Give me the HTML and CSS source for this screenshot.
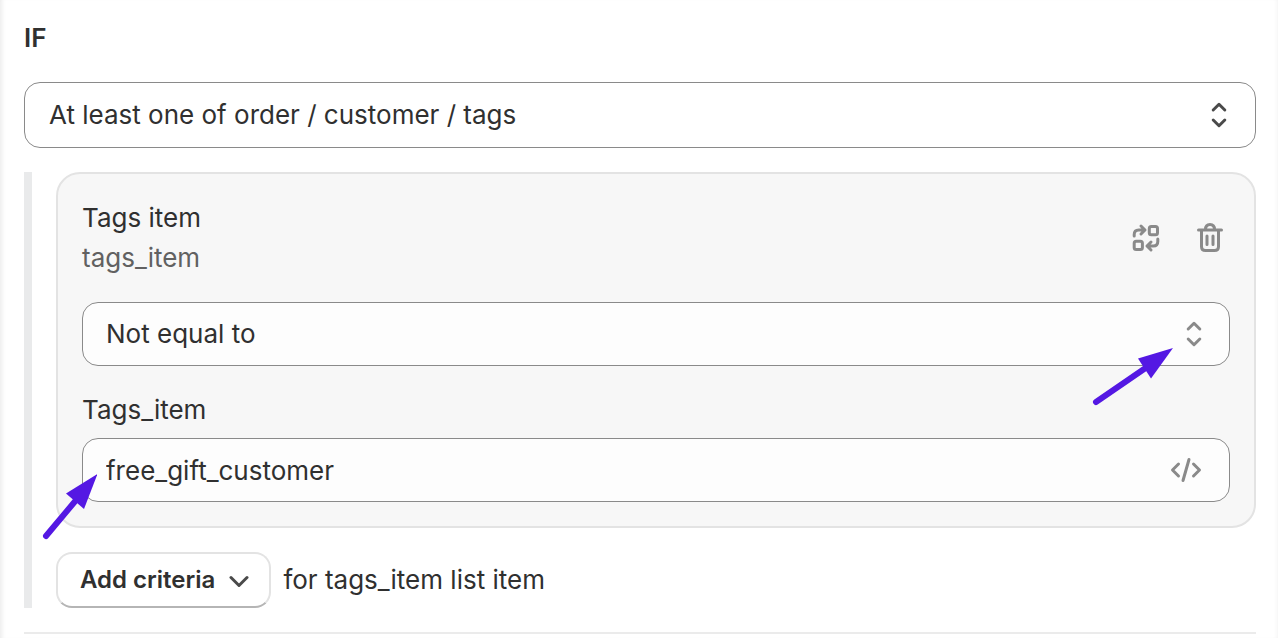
FILE: index.html
```html
<!DOCTYPE html>
<html lang="en">

<head>
    <meta charset="UTF-8">
    <meta name="viewport" content="width=device-width, initial-scale=1.0">
    <title>Condition</title>
    <link rel="stylesheet" href="styles.css">
</head>

<body>
    <main class="panel">
        <h1 class="title">IF</h1>
        <div class="field">
            <select class="control control-large" aria-label="Condition">
                <option>At least one of order / customer / tags</option>
            </select>
            <svg class="icon field-icon icon-dark" viewBox="0 0 40 40">
                <path d="M13.200 15l5.800-5.700l5.800 5.700M13.200 25l5.800 5.700l5.800-5.700" />
            </svg>
        </div>

        <section class="group">
            <div class="card">
                <div class="card-header">
                    <div>
                        <h2 class="card-title">Tags item</h2>
                        <p class="card-subtitle">tags_item</p>
                    </div>
                    <div class="card-actions">
                        <button class="icon-button" type="button" aria-label="Replace">
                            <svg class="icon" viewBox="0 0 40 40">
                                <path d="M8.200 18v-1.500q0-4.500 4.500-4.500h5.500M15 8l4 4l-4 4" />
                                <rect x="23.300" y="8.600" width="8.200" height="8.200" rx="2" />
                                <rect x="8.200" y="23.200" width="8.200" height="8.200" rx="2" />
                                <path d="M31.800 21v2.500q0 4.500-4.500 4.500h-5.500M25 24l-4 4l4 4" />
                            </svg>
                        </button>
                        <button class="icon-button" type="button" aria-label="Delete">
                            <svg class="icon" viewBox="0 0 40 40">
                                <path d="M8.500 12h23M15.500 11.500q0-5 4.500-5t4.500 5M11.500 12v16.500q0 4 4 4h9q4 0 4-4V12M17 18v8.500M23 18v8.500" />
                            </svg>
                        </button>
                    </div>
                </div>

                <div class="field">
                    <select class="control" aria-label="Operator">
                        <option>Not equal to</option>
                    </select>
                    <svg class="icon field-icon" viewBox="0 0 40 40">
                        <path d="M14.200 15l5.800-5.700l5.800 5.700M14.200 25l5.800 5.700l5.800-5.700" />
                    </svg>
                    <svg class="arrow arrow-operator" viewBox="0 0 82 60">
                        <path class="arrow-line" d="M5 54L56 19" />
                        <path class="arrow-head" d="M82 0L47 10.500L60 30.500z" />
                    </svg>
                </div>

                <label class="label" for="tag">Tags_item</label>
                <div class="field">
                    <input class="control" id="tag" type="text" value="free_gift_customer">
                    <button class="icon-button code-button" type="button" aria-label="Insert variable">
                        <svg class="icon" viewBox="0 0 40 40">
                            <path d="M12.500 14l-6 6l6 6M27.500 14l6 6l-6 6M23 9.500l-6 21" />
                        </svg>
                    </button>
                    <svg class="arrow arrow-value" viewBox="0 0 56 66">
                        <path class="arrow-line" d="M5 62L36 25" />
                        <path class="arrow-head" d="M56.500 0L25 19.500L43 35z" />
                    </svg>
                </div>
            </div>

            <div class="criteria">
                <button class="add-button" type="button">
                    Add criteria
                    <svg class="chevron" viewBox="0 0 20 20">
                        <path d="M2 7.500l8 8l8-8" />
                    </svg>
                </button>
                <span>for tags_item list item</span>
            </div>
        </section>
        <hr class="divider">
    </main>
</body>

</html>
```

FILE: styles.css
```css
* {
    box-sizing: border-box;
    margin: 0;
    padding: 0;
}

body {
    background-color: #fff;
    color: #303030;
    font-family: "Inter", "Liberation Sans", sans-serif;
    font-size: 26px;
    line-height: 40px;
}

.panel {
    padding: 18px 22px 4px 24px;
    box-shadow: inset 5px 0 4px -3px #ececec, inset -4px 0 4px -3px #f4f4f4;
}

.title {
    margin-bottom: 24px;
    font-size: 26px;
    font-weight: 600;
}

.field {
    position: relative;
}

.control {
    display: block;
    width: 100%;
    height: 64px;
    padding: 0 72px 0 23px;
    border: 1px solid #8a8a8a;
    border-radius: 16px;
    background-color: #fdfdfd;
    color: #303030;
    font: inherit;
    appearance: none;
}

.control-large {
    height: 66px;
    padding-left: 24px;
    background-color: #fff;
}

/* icons */
.icon {
    display: block;
    width: 40px;
    height: 40px;
    fill: none;
    stroke: #8a8a8a;
    stroke-width: 3;
    stroke-linecap: round;
    stroke-linejoin: round;
}

.icon-dark {
    stroke: #4a4a4a;
}

.field-icon {
    position: absolute;
    top: calc(50% - 20px);
    right: 16px;
    pointer-events: none;
}

.icon-button {
    border: none;
    background: none;
    cursor: pointer;
}

.code-button {
    position: absolute;
    top: 12px;
    right: 24px;
}

/* group with the bar on the left */
.group {
    margin-top: 24px;
    padding-left: 24px;
    border-left: 8px solid #e9eaeb;
}

.card {
    padding: 24px;
    border: 2px solid #e3e3e3;
    border-radius: 24px;
    background-color: #f7f7f7;
}

.card-header {
    display: flex;
    align-items: center;
    justify-content: space-between;
    margin-bottom: 24px;
}

.card-title {
    font-size: 26px;
    font-weight: 400;
}

.card-subtitle {
    color: #616161;
}

.card-actions {
    display: flex;
    gap: 24px;
}

.label {
    display: block;
    margin: 24px 0 8px;
}

.criteria {
    display: flex;
    align-items: center;
    gap: 12px;
    margin-top: 24px;
}

.add-button {
    display: flex;
    align-items: center;
    gap: 14px;
    height: 56px;
    padding: 0 20px 0 22px;
    border: 2px solid #e3e3e3;
    border-bottom-color: #b5b5b5;
    border-radius: 16px;
    background-color: #fff;
    color: #303030;
    font: inherit;
    font-size: 24px;
    font-weight: 600;
    cursor: pointer;
}

.chevron {
    width: 20px;
    height: 20px;
    fill: none;
    stroke: #4a4a4a;
    stroke-width: 3;
    stroke-linecap: round;
    stroke-linejoin: round;
}

.divider {
    margin-top: 24px;
    border: none;
    border-top: 2px solid #ebebeb;
}

/* arrows drawn over the fields */
.arrow {
    position: absolute;
    z-index: 1;
    fill: #5418e3;
    pointer-events: none;
}

.arrow-line {
    stroke: #5418e3;
    stroke-width: 6;
    stroke-linecap: round;
}

.arrow-operator {
    top: 46px;
    right: 57px;
    width: 82px;
    height: 60px;
}

.arrow-value {
    top: 36px;
    left: -41px;
    width: 56px;
    height: 66px;
}
```
